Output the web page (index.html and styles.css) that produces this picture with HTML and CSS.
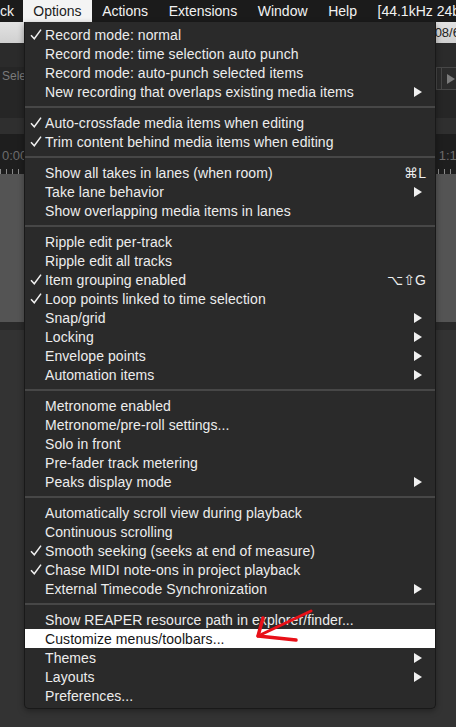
FILE: index.html
```html
<!DOCTYPE html>
<html>
<head>
<meta charset="utf-8">
<link rel="stylesheet" href="styles.css">
</head>
<body>
<div class="menubar">
  <span class="mb-item first">ck</span>
  <span class="mb-item active">Options</span>
  <span class="mb-item">Actions</span>
  <span class="mb-item">Extensions</span>
  <span class="mb-item">Window</span>
  <span class="mb-item">Help</span>
  <span class="mb-item">[44.1kHz 24bit WAV : 2/2ch 512spls ~11.6/11.6ms CoreAudio]</span>
</div>
<div class="workspace">
  <div class="row r1"><span></span><span class="date">08/6/19</span></div>
  <div class="row r2"></div>
  <div class="row r3"><span class="sel">Select</span><span class="playbtn"><span class="play"></span></span></div>
  <div class="row r4"></div>
  <div class="row r5"><span class="time">0:00</span><span class="time right">1:16</span></div>
  <div class="row r6"></div>
  <div class="row r7"></div>

  <div class="menu">
    <div class="item"><span class="chk"><svg width="12" height="11" viewBox="0 0 12 11"><path d="M1 6.2 L4.3 9.8 L11 0.6" fill="none" stroke="#f0f0f0" stroke-width="1.5"/></svg></span><span class="lbl">Record mode: normal</span></div>
    <div class="item"><span class="chk"></span><span class="lbl">Record mode: time selection auto punch</span></div>
    <div class="item"><span class="chk"></span><span class="lbl">Record mode: auto-punch selected items</span></div>
    <div class="item"><span class="chk"></span><span class="lbl">New recording that overlaps existing media items</span><span class="sub"></span></div>
    <div class="sep"></div>
    <div class="item"><span class="chk"><svg width="12" height="11" viewBox="0 0 12 11"><path d="M1 6.2 L4.3 9.8 L11 0.6" fill="none" stroke="#f0f0f0" stroke-width="1.5"/></svg></span><span class="lbl">Auto-crossfade media items when editing</span></div>
    <div class="item"><span class="chk"><svg width="12" height="11" viewBox="0 0 12 11"><path d="M1 6.2 L4.3 9.8 L11 0.6" fill="none" stroke="#f0f0f0" stroke-width="1.5"/></svg></span><span class="lbl">Trim content behind media items when editing</span></div>
    <div class="sep"></div>
    <div class="item"><span class="chk"></span><span class="lbl">Show all takes in lanes (when room)</span><span class="key">⌘L</span></div>
    <div class="item"><span class="chk"></span><span class="lbl">Take lane behavior</span><span class="sub"></span></div>
    <div class="item"><span class="chk"></span><span class="lbl">Show overlapping media items in lanes</span></div>
    <div class="sep"></div>
    <div class="item"><span class="chk"></span><span class="lbl">Ripple edit per-track</span></div>
    <div class="item"><span class="chk"></span><span class="lbl">Ripple edit all tracks</span></div>
    <div class="item"><span class="chk"><svg width="12" height="11" viewBox="0 0 12 11"><path d="M1 6.2 L4.3 9.8 L11 0.6" fill="none" stroke="#f0f0f0" stroke-width="1.5"/></svg></span><span class="lbl">Item grouping enabled</span><span class="key">⌥⇧G</span></div>
    <div class="item"><span class="chk"><svg width="12" height="11" viewBox="0 0 12 11"><path d="M1 6.2 L4.3 9.8 L11 0.6" fill="none" stroke="#f0f0f0" stroke-width="1.5"/></svg></span><span class="lbl">Loop points linked to time selection</span></div>
    <div class="item"><span class="chk"></span><span class="lbl">Snap/grid</span><span class="sub"></span></div>
    <div class="item"><span class="chk"></span><span class="lbl">Locking</span><span class="sub"></span></div>
    <div class="item"><span class="chk"></span><span class="lbl">Envelope points</span><span class="sub"></span></div>
    <div class="item"><span class="chk"></span><span class="lbl">Automation items</span><span class="sub"></span></div>
    <div class="sep"></div>
    <div class="item"><span class="chk"></span><span class="lbl">Metronome enabled</span></div>
    <div class="item"><span class="chk"></span><span class="lbl">Metronome/pre-roll settings...</span></div>
    <div class="item"><span class="chk"></span><span class="lbl">Solo in front</span></div>
    <div class="item"><span class="chk"></span><span class="lbl">Pre-fader track metering</span></div>
    <div class="item"><span class="chk"></span><span class="lbl">Peaks display mode</span><span class="sub"></span></div>
    <div class="sep"></div>
    <div class="item"><span class="chk"></span><span class="lbl">Automatically scroll view during playback</span></div>
    <div class="item"><span class="chk"></span><span class="lbl">Continuous scrolling</span></div>
    <div class="item"><span class="chk"><svg width="12" height="11" viewBox="0 0 12 11"><path d="M1 6.2 L4.3 9.8 L11 0.6" fill="none" stroke="#f0f0f0" stroke-width="1.5"/></svg></span><span class="lbl">Smooth seeking (seeks at end of measure)</span></div>
    <div class="item"><span class="chk"><svg width="12" height="11" viewBox="0 0 12 11"><path d="M1 6.2 L4.3 9.8 L11 0.6" fill="none" stroke="#f0f0f0" stroke-width="1.5"/></svg></span><span class="lbl">Chase MIDI note-ons in project playback</span></div>
    <div class="item"><span class="chk"></span><span class="lbl">External Timecode Synchronization</span><span class="sub"></span></div>
    <div class="sep"></div>
    <div class="item"><span class="chk"></span><span class="lbl">Show REAPER resource path in explorer/finder...</span></div>
    <div class="item hl"><span class="chk"></span><span class="lbl">Customize menus/toolbars...</span></div>
    <div class="item"><span class="chk"></span><span class="lbl">Themes</span><span class="sub"></span></div>
    <div class="item"><span class="chk"></span><span class="lbl">Layouts</span><span class="sub"></span></div>
    <div class="item"><span class="chk"></span><span class="lbl">Preferences...</span></div>
  </div>

  <svg class="arrow" width="456" height="727" viewBox="0 0 456 727">
    <path d="M311 611 L258 636" fill="none" stroke="#e81018" stroke-width="3" stroke-linecap="round"/>
    <path d="M263 618 L258 636 L296 640" fill="none" stroke="#e81018" stroke-width="3.5" stroke-linecap="round" stroke-linejoin="round"/>
  </svg>
</div>
</body>
</html>
```
FILE: styles.css
```css
* { box-sizing: border-box; }
html, body {
  margin: 0;
  padding: 0;
}
body {
  width: 456px;
  height: 727px;
  overflow: hidden;
  background: #333333;
  font-family: "Liberation Sans", "DejaVu Sans", Arial, sans-serif;
  font-size: 14px;
  color: #ececec;
}
.menubar {
  display: flex;
  height: 22px;
  background: #1b1b1b;
  white-space: nowrap;
  overflow: hidden;
}
.mb-item {
  display: flex;
  align-items: center;
  padding: 0 10.3px;
  height: 22px;
  color: #f2f2f2;
  flex: none;
}
.mb-item.first { padding-left: 0; padding-right: 9px; }
.mb-item.active {
  background: #f4f4f4;
  color: #1c1c1c;
}
.workspace {
  position: relative;
  height: 705px;
}
.row {
  display: flex;
  justify-content: space-between;
  align-items: center;
  overflow: hidden;
  white-space: nowrap;
}
.r1 { height: 21px; background: linear-gradient(#e2e2e2, #d0d0d0); }
.r1 .date { font-size: 13px; color: #222; margin-right: -22px; }
.r2 { height: 24px; background: #2b2b2b; }
.r3 { height: 51px; background: #262626; align-items: flex-start; }
.r3 .sel { font-size: 12px; color: #7a7a7a; margin-top: 2px; margin-left: 2px; }
.playbtn {
  width: 24px;
  height: 23px;
  margin-right: -4px;
  border: 1px solid #474747;
  border-right: none;
  background: #2c2c2c;
  display: flex;
  align-items: center;
  padding-left: 10px;
  box-shadow: inset 4px 0 0 #2c2c2c, inset 5px 0 0 #474747;
}
.play {
  width: 0;
  height: 0;
  border-left: 8px solid #7c7c7c;
  border-top: 5px solid transparent;
  border-bottom: 5px solid transparent;
}
.r4 { height: 16px; background: #2f2f2f; }
.r5 {
  height: 40px;
  background:
    repeating-linear-gradient(90deg, #8a8a8a 0 1px, transparent 1px 6px) left bottom / 100% 5px no-repeat,
    #1e1e1e;
}
.time { font-size: 13px; color: #6c6c6c; margin-left: 2px; margin-top: 2px; }
.time.right { margin-right: -8px; margin-left: 0; }
.r6 { height: 148px; background: #545454; }
.r7 { height: 8px; background: #2a2a2a; }

.menu {
  position: absolute;
  left: 24px;
  top: 0;
  width: 412px;
  background: #2a2a2a;
  border: 1px solid #191919;
  border-top: none;
  border-radius: 0 0 5px 5px;
  padding: 3px 0 3px;
  box-shadow: 0 2px 6px rgba(0,0,0,0.35);
  letter-spacing: 0.08px;
}
.item {
  display: flex;
  align-items: center;
  height: 19px;
  padding: 0 9px 0 5px;
  white-space: nowrap;
  color: #ededed;
}
.chk {
  width: 15px;
  flex: none;
  display: flex;
  align-items: center;
}
.chk svg { display: block; }
.lbl { flex: 1; }
.sub {
  width: 0;
  height: 0;
  margin-right: 4px;
  border-left: 8px solid #f0f0f0;
  border-top: 5px solid transparent;
  border-bottom: 5px solid transparent;
}
.key { color: #ededed; }
.item.hl {
  background: #ffffff;
  color: #141414;
}
.sep {
  height: 12px;
  display: flex;
  align-items: center;
}
.sep::before {
  content: "";
  display: block;
  width: 100%;
  height: 2px;
  background: #474747;
}
.arrow {
  position: absolute;
  left: 0;
  top: -22px;
  pointer-events: none;
}
```
